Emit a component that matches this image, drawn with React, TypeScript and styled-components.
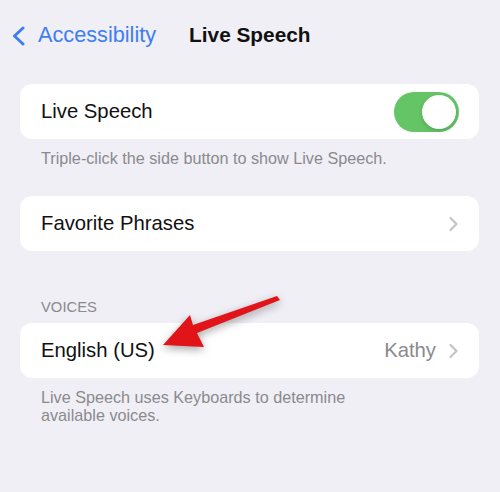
import styled, { createGlobalStyle } from 'styled-components';

const GlobalStyle = createGlobalStyle`
  html, body {
    margin: 0;
    padding: 0;
    background: #f0eff5;
  }
  body {
    font-family: 'Liberation Sans', Arial, sans-serif;
    -webkit-font-smoothing: antialiased;
  }
`;

function App() {
  return (
    <Page>
      <GlobalStyle />
      <NavBar>
        <BackLink>
          <svg width="15" height="20" viewBox="0 0 15 20">
            <path
              d="M12 2 L3.5 10 L12 18"
              fill="none"
              stroke="#3f7ef0"
              strokeWidth="3"
              strokeLinecap="round"
              strokeLinejoin="round"
            />
          </svg>
          <span>Accessibility</span>
        </BackLink>
        <NavTitle>Live Speech</NavTitle>
      </NavBar>

      <Content>
        <Card>
          <Row>
            <RowLabel>Live Speech</RowLabel>
            <Toggle>
              <Knob />
            </Toggle>
          </Row>
        </Card>
        <Footer>Triple-click the side button to show Live Speech.</Footer>

        <Card $top={29}>
          <Row>
            <RowLabel>Favorite Phrases</RowLabel>
            <Chevron />
          </Row>
        </Card>

        <SectionHeader>VOICES</SectionHeader>
        <Card>
          <Row>
            <RowLabel>English (US)</RowLabel>
            <RowValue>
              Kathy
              <Chevron />
            </RowValue>
          </Row>
        </Card>
        <Footer>
          Live Speech uses Keyboards to determine
          <br />
          available voices.
        </Footer>

        <Arrow width="140" height="70" viewBox="0 0 140 70">
          <polygon
            points="3,59 30,29 33,39 117,10 120,14 37,47 44,61"
            fill="#e11419"
          />
        </Arrow>
      </Content>
    </Page>
  );
}

function Chevron() {
  return (
    <svg width="11" height="16" viewBox="0 0 11 16">
      <path
        d="M2.5 2 L8.5 8 L2.5 14"
        fill="none"
        stroke="#c4c4c7"
        strokeWidth="2.2"
        strokeLinecap="round"
        strokeLinejoin="round"
      />
    </svg>
  );
}

const Page = styled.div`
  width: 500px;
  height: 492px;
  background: #f0eff5;
  overflow: hidden;
`;

const NavBar = styled.div`
  height: 70px;
  display: flex;
  align-items: center;
  padding-left: 11px;
`;

const BackLink = styled.div`
  display: flex;
  align-items: center;
  gap: 12px;
  color: #3f7ef0;
  font-size: 21.7px;

  svg {
    margin-top: 1px;
  }
`;

const NavTitle = styled.div`
  margin-left: 33px;
  font-size: 20.8px;
  font-weight: 700;
  color: #111;
`;

const Content = styled.div`
  position: relative;
  padding: 14px 21px 0 20px;
`;

const Card = styled.div<{ $top?: number }>`
  background: #ffffff;
  border-radius: 12px;
  margin-top: ${p => (p.$top ? `${p.$top}px` : '0')};
`;

const Row = styled.div`
  height: 55px;
  display: flex;
  align-items: center;
  justify-content: space-between;
  padding: 0 20px 0 21px;
`;

const RowLabel = styled.div`
  font-size: 20.3px;
  color: #111;
`;

const RowValue = styled.div`
  display: flex;
  align-items: center;
  gap: 12px;
  font-size: 20.3px;
  color: #8a8a8e;
`;

const Toggle = styled.div`
  width: 65px;
  height: 40px;
  border-radius: 20px;
  background: #65c466;
  display: flex;
  align-items: center;
  justify-content: flex-end;
  padding: 0 3px;
  box-sizing: border-box;
`;

const Knob = styled.div`
  width: 34px;
  height: 34px;
  border-radius: 50%;
  background: #fff;
  box-shadow: 0 2px 4px rgba(0, 0, 0, 0.15);
`;

const Footer = styled.div`
  padding: 10px 21px 0;
  font-size: 16.2px;
  line-height: 18px;
  color: #8a8a8e;
`;

const SectionHeader = styled.div`
  margin-top: 48px;
  padding: 0 21px 8px;
  font-size: 14.8px;
  color: #8a8a8e;
`;

const Arrow = styled.svg`
  position: absolute;
  left: 160px;
  top: 216px;
  filter: drop-shadow(0 3px 4px rgba(0, 0, 0, 0.35));
`;

export default App;
